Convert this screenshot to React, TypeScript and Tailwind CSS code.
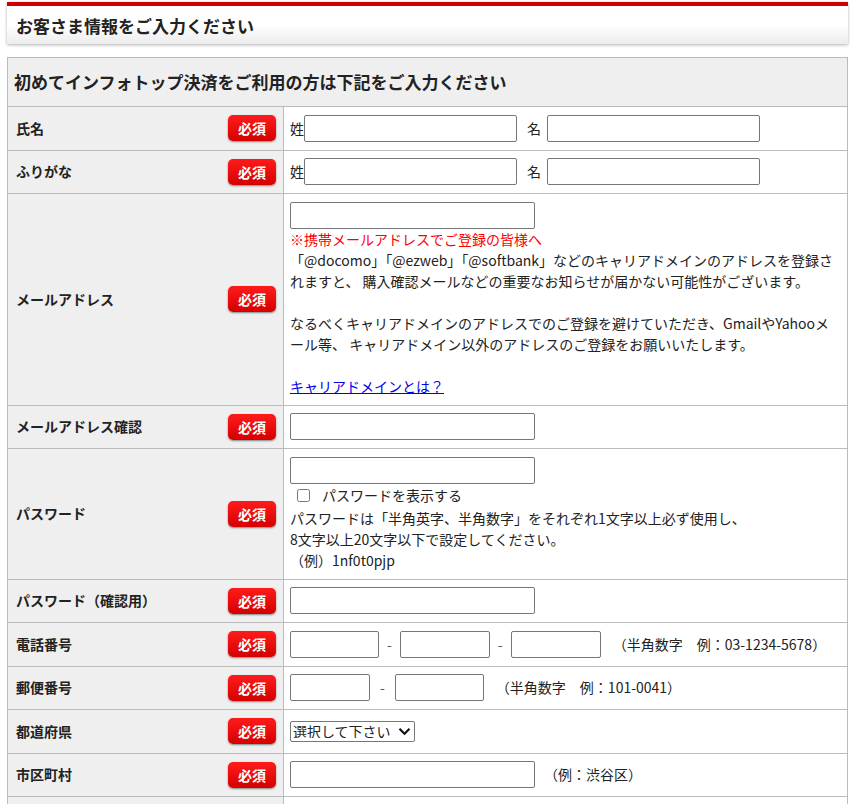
import React from "react";

const Badge = () => (
  <span className="inline-flex items-center justify-center w-[48px] h-[26px] rounded-[5px] bg-gradient-to-b from-[#ff1a1a] to-[#d40000] text-white font-bold text-[14px] leading-none shadow-[0_1px_2px_rgba(0,0,0,0.45)] shrink-0">
    必須
  </span>
);

const Input = ({ w }: { w: string }) => (
  <input
    type="text"
    className={`${w} h-[27px] border border-[#767676] rounded-[2px] bg-white px-1 text-[14px] shrink-0`}
  />
);

const Row = ({ label, children }: { label: string; children: React.ReactNode }) => (
  <tr>
    <td className="w-[276px] bg-[#efefef] border border-[#bbbbbb] pl-[8px] pr-[7px] align-middle">
      <div className="flex items-center justify-between">
        <span className="font-bold text-[14px] text-[#222]">{label}</span>
        <Badge />
      </div>
    </td>
    <td className="border border-[#bbbbbb] px-[6px] py-[7.75px] align-middle text-[14px] text-[#222] leading-[21px]">
      {children}
    </td>
  </tr>
);

export default function App() {
  return (
    <div className="[font-family:'Noto_Sans_CJK_JP',sans-serif] bg-white min-h-[804px] pl-[7px] pt-[2px] overflow-hidden">
      <div className="w-[841px]">
        <div className="h-[42px] border-t-[4px] border-[#cc0000] bg-gradient-to-b from-white from-50% to-[#ececec] shadow-[0_1px_3px_rgba(0,0,0,0.3)] flex items-center pl-[9px]">
          <h2 className="font-bold text-[17px] text-[#222] leading-none">お客さま情報をご入力ください</h2>
        </div>
        <table className="mt-[13px] w-full border-collapse border border-[#bbbbbb] table-fixed">
          <colgroup>
            <col className="w-[276px]" />
            <col />
          </colgroup>
          <tbody>
            <tr>
              <td colSpan={2} className="bg-[#efefef] border border-[#bbbbbb] h-[49px] pl-[6px] align-middle">
                <span className="font-bold text-[17px] text-[#222]">初めてインフォトップ決済をご利用の方は下記をご入力ください</span>
              </td>
            </tr>
            <Row label="氏名">
              <div className="flex items-center">
                <span>姓</span>
                <Input w="w-[213px]" />
                <span className="ml-[10px] mr-[6px]">名</span>
                <Input w="w-[213px]" />
              </div>
            </Row>
            <Row label="ふりがな">
              <div className="flex items-center">
                <span>姓</span>
                <Input w="w-[213px]" />
                <span className="ml-[10px] mr-[6px]">名</span>
                <Input w="w-[213px]" />
              </div>
            </Row>
            <Row label="メールアドレス">
              <div className="flex">
                <Input w="w-[245px]" />
              </div>
              <p className="text-[#ff0000]">※携帯メールアドレスでご登録の皆様へ</p>
              <p>
                「@docomo」「@ezweb」「@softbank」などのキャリアドメインのアドレスを登録されますと、 購入確認メールなどの重要なお知らせが届かない可能性がございます。
              </p>
              <p>&nbsp;</p>
              <p>
                なるべくキャリアドメインのアドレスでのご登録を避けていただき、GmailやYahooメール等、 キャリアドメイン以外のアドレスのご登録をお願いいたします。
              </p>
              <p>&nbsp;</p>
              <p>
                <a href="#" className="text-[#0000ee] underline">キャリアドメインとは？</a>
              </p>
            </Row>
            <Row label="メールアドレス確認">
              <div className="flex">
                <Input w="w-[245px]" />
              </div>
            </Row>
            <Row label="パスワード">
              <div className="flex">
                <Input w="w-[245px]" />
              </div>
              <label className="flex items-center h-[24px] pl-[7px]">
                <input type="checkbox" className="w-[13px] h-[13px] mr-[12px]" />
                <span>パスワードを表示する</span>
              </label>
              <p>パスワードは「半角英字、半角数字」をそれぞれ1文字以上必ず使用し、</p>
              <p>8文字以上20文字以下で設定してください。</p>
              <p>（例）1nf0t0pjp</p>
            </Row>
            <Row label="パスワード（確認用）">
              <div className="flex">
                <Input w="w-[245px]" />
              </div>
            </Row>
            <Row label="電話番号">
              <div className="flex items-center">
                <Input w="w-[89px]" />
                <span className="mx-[8px] text-[#555]">-</span>
                <Input w="w-[90px]" />
                <span className="mx-[8px] text-[#555]">-</span>
                <Input w="w-[90px]" />
                <span className="ml-[12px]">（半角数字　例：03-1234-5678）</span>
              </div>
            </Row>
            <Row label="郵便番号">
              <div className="flex items-center">
                <Input w="w-[80px]" />
                <span className="mx-[10px] text-[#555]">-</span>
                <Input w="w-[89px]" />
                <span className="ml-[12px]">（半角数字　例：101-0041）</span>
              </div>
            </Row>
            <Row label="都道府県">
              <div className="flex items-center h-[27px]">
                <div className="relative">
                  <select className="appearance-none w-[125px] h-[21px] border border-[#767676] rounded-[2px] text-[14px] leading-none bg-white pl-[2px] pr-[18px] text-[#222]">
                    <option>選択して下さい</option>
                  </select>
                  <svg
                    className="absolute right-[4px] top-[6px] pointer-events-none"
                    width="13"
                    height="9"
                    viewBox="0 0 13 9"
                  >
                    <path d="M1.5 1.8 L6.5 6.8 L11.5 1.8" fill="none" stroke="#111" strokeWidth="2.2" />
                  </svg>
                </div>
              </div>
            </Row>
            <Row label="市区町村">
              <div className="flex items-center">
                <Input w="w-[245px]" />
                <span className="ml-[9px]">（例：渋谷区）</span>
              </div>
            </Row>
            <Row label="番地・建物名">
              <div className="flex items-center">
                <Input w="w-[363px]" />
              </div>
            </Row>
          </tbody>
        </table>
      </div>
    </div>
  );
}
